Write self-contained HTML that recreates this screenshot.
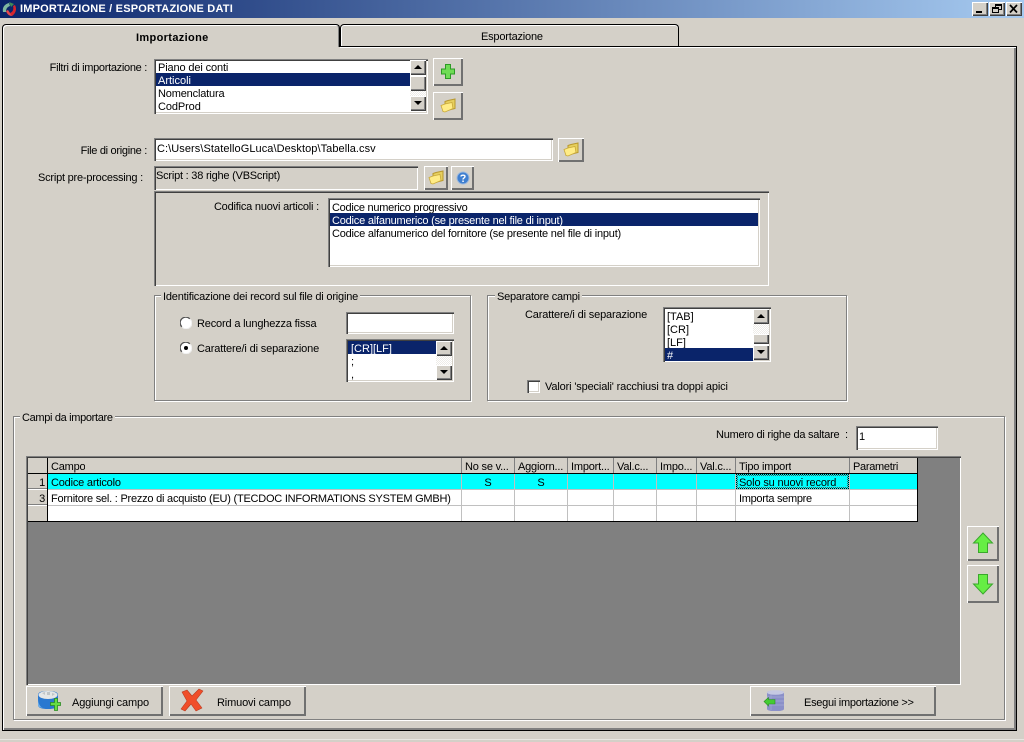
<!DOCTYPE html>
<html><head><meta charset="utf-8"><style>
html,body{margin:0;padding:0;background:#d4d0c8;width:1024px;height:742px;overflow:hidden}
body{position:relative;font-family:"Liberation Sans",sans-serif;font-size:11px;color:#000;letter-spacing:-.2px}
div,svg{position:absolute;box-sizing:border-box}
.t{white-space:pre;line-height:15px;height:13px}
.r{text-align:right}
.s{background:#fff;box-shadow:inset 1px 1px #808080,inset 2px 2px #404040,inset -1px -1px #fff,inset -2px -2px #d4d0c8}
.b{background:#d4d0c8;box-shadow:inset 1px 1px #fff,inset -1px -1px #404040,inset -2px -2px #808080}
.p{background:#d4d0c8;box-shadow:inset 1px 1px #fff,inset -2px -2px #707070}
.g{border:1px solid #808080;box-shadow:1px 1px #fff,inset 1px 1px #fff}
.l{background:#d4d0c8;padding:0 2px;white-space:pre;line-height:17px;height:13px}
.sel{background:#0a246a;color:#fff;height:13px;line-height:17px;white-space:pre;padding-left:2px}
.row{height:13px;line-height:17px;white-space:pre;padding-left:2px}
.up:after,.dn:after{content:"";position:absolute;left:4px;width:0;height:0;border-left:4px solid transparent;border-right:4px solid transparent}
.up:after{top:5px;border-bottom:4px solid #000}
.dn:after{top:5px;border-top:4px solid #000}
.chk{background-color:#eeece8;background-image:linear-gradient(45deg,#fff 25%,transparent 25%,transparent 75%,#fff 75%),linear-gradient(45deg,#fff 25%,transparent 25%,transparent 75%,#fff 75%);background-size:2px 2px;background-position:0 0,1px 1px}
.c{height:15px;line-height:19px;white-space:pre;padding-left:3px;overflow:hidden}
.v{width:1px;background:#c0c0c0}
.h{width:1px;background:#808080}
</style></head><body>

<!-- title bar -->
<div style="left:0;top:0;width:1024px;height:18px;background:linear-gradient(90deg,#0a246a,#a6caf0)"></div>
<svg style="left:1px;top:1px" width="18" height="17" viewBox="0 0 18 17"><path d="M2 11C1 6 4 3 8 2L9 5C6 6 5 8 5 11Z" fill="#7fb9a0"/><path d="M8 1L13 3L10 6Z" fill="#3d8a5a"/><path d="M14 4C16 8 15 12 11 15L9 12C12 11 13 8 12 5Z" fill="#d8262c"/><path d="M5 10C6 13 8 15 11 15L9 12L7 9Z" fill="#e8484c"/></svg>
<div class="t" style="left:20px;top:2px;color:#fff;font-weight:bold;letter-spacing:.2px">IMPORTAZIONE / ESPORTAZIONE DATI</div>
<div class="b" style="left:972px;top:2px;width:16px;height:14px"><div style="left:4px;top:9px;width:6px;height:2px;background:#000"></div></div>
<div class="b" style="left:989px;top:2px;width:16px;height:14px"><div style="left:6px;top:2px;width:7px;height:6px;border:1px solid #000;border-top-width:2px"></div><div style="left:3px;top:5px;width:7px;height:6px;border:1px solid #000;border-top-width:2px;background:#d4d0c8"></div></div>
<div class="b" style="left:1006px;top:2px;width:16px;height:14px"><svg style="left:3px;top:2px" width="10" height="10"><path d="M1 1L8 8.5M8 1L1 8.5" stroke="#000" stroke-width="1.7" fill="none"/></svg></div>

<!-- panel -->
<div style="left:2px;top:46px;width:1015px;height:685px;border:1px solid #000;box-shadow:inset 1px 1px #fff,inset -2px -2px #808080"></div>
<!-- inactive tab -->
<div style="left:340px;top:24px;width:339px;height:23px;background:#d4d0c8;border:1px solid #000;border-bottom:0;border-top-left-radius:4px;border-top-right-radius:4px;box-shadow:inset 0 1px #fff,inset 1px 0 #fff"></div>
<div style="left:340px;top:46px;width:677px;height:1px;background:#000"></div>
<div style="left:340px;top:47px;width:675px;height:1px;background:#fff"></div>
<div class="t" style="left:481px;top:30px">Esportazione</div>
<!-- active tab -->
<div style="left:2px;top:24px;width:338px;height:23px;background:#d4d0c8;border:1px solid #000;border-bottom:0;border-top-left-radius:4px;border-top-right-radius:4px;box-shadow:inset 1px 1px #fff,inset -1px 0 #808080"></div>
<div style="left:3px;top:47px;width:337px;height:2px;background:#d4d0c8;box-shadow:inset 1px 0 #fff"></div>
<div class="t" style="left:136px;top:31px;font-weight:bold;letter-spacing:.35px">Importazione</div>

<!-- filtri -->
<div class="t r" style="left:20px;width:127px;top:61px;letter-spacing:-.3px">Filtri di importazione :</div>
<div class="s" style="left:154px;top:59px;width:274px;height:55px"></div>
<div class="row" style="left:156px;top:60px;letter-spacing:-.13px">Piano dei conti</div>
<div class="sel" style="left:156px;top:73px;width:254px;letter-spacing:0">Articoli</div>
<div class="row" style="left:156px;top:86px;letter-spacing:-.17px">Nomenclatura</div>
<div class="row" style="left:156px;top:99px;letter-spacing:-.1px">CodProd</div>
<div class="b up" style="left:410px;top:60px;width:16px;height:15px"></div>
<div class="b" style="left:410px;top:76px;width:16px;height:15px"></div>
<div class="chk" style="left:410px;top:91px;width:16px;height:5px"></div>
<div class="b dn" style="left:410px;top:96px;width:16px;height:15px"></div>

<div class="p" style="left:433px;top:58px;width:30px;height:28px"><svg style="left:7px;top:5px" width="16" height="17" viewBox="0 0 16 17"><path d="M5.500 1.500H10.500V6H14.500V11H10.500V15.500H5.500V11H1.500V6H5.500Z" fill="#6fdc55" stroke="#2c9a25"/></svg></div>
<div class="p" style="left:433px;top:92px;width:30px;height:28px"><svg style="left:7px;top:6px" width="16" height="16" viewBox="0 0 16 16"><path d="M5 5L5 3.500L8 2.500L15 1V10.500L5 13Z" fill="#e6cf5e" stroke="#b8982e"/><path d="M1 7.500L5 6L12 4.500L13 10.500L5 14L3 13.500Z" fill="#ffec86" stroke="#c8a83a" stroke-width=".8"/></svg></div>

<!-- file -->
<div class="t r" style="left:20px;width:127px;top:144px;letter-spacing:-.3px">File di origine :</div>
<div class="s" style="left:154px;top:138px;width:399px;height:23px"></div>
<div class="t" style="left:157px;top:142px;letter-spacing:.07px">C:\Users\StatelloGLuca\Desktop\Tabella.csv</div>
<div class="p" style="left:558px;top:138px;width:26px;height:24px"><svg style="left:5px;top:4px" width="16" height="16" viewBox="0 0 16 16"><path d="M5 5L5 3.500L8 2.500L15 1V10.500L5 13Z" fill="#e6cf5e" stroke="#b8982e"/><path d="M1 7.500L5 6L12 4.500L13 10.500L5 14L3 13.500Z" fill="#ffec86" stroke="#c8a83a" stroke-width=".8"/></svg></div>

<!-- script -->
<div class="t r" style="left:20px;width:123px;top:171px;letter-spacing:-.22px">Script pre-processing :</div>
<div class="s" style="left:154px;top:166px;width:264px;height:24px;background:#d4d0c8"></div>
<div class="t" style="left:156px;top:169px;letter-spacing:-.22px">Script : 38 righe (VBScript)</div>
<div class="p" style="left:424px;top:166px;width:24px;height:24px"><svg style="left:4px;top:4px" width="16" height="16" viewBox="0 0 16 16"><path d="M5 5L5 3.500L8 2.500L15 1V10.500L5 13Z" fill="#e6cf5e" stroke="#b8982e"/><path d="M1 7.500L5 6L12 4.500L13 10.500L5 14L3 13.500Z" fill="#ffec86" stroke="#c8a83a" stroke-width=".8"/></svg></div>
<div class="p" style="left:451px;top:166px;width:23px;height:24px"><svg style="left:5px;top:5px" width="14" height="14" viewBox="0 0 14 14"><circle cx="7" cy="7" r="6" fill="#3f7fd0" stroke="#9cb9de"/><path d="M5 5.500C5 3.800 9 3.800 9 5.500C9 7 7 6.800 7 8.500" stroke="#fff" stroke-width="1.400" fill="none"/><rect x="6.300" y="9.500" width="1.500" height="1.500" fill="#fff"/></svg></div>

<!-- codifica -->
<div style="left:154px;top:191px;width:615px;height:95px;box-shadow:inset 1px 1px #808080,inset 2px 2px #404040,inset -1px -1px #fff"></div>
<div class="t r" style="left:180px;width:139px;top:200px;letter-spacing:-.2px">Codifica nuovi articoli :</div>
<div class="s" style="left:328px;top:198px;width:432px;height:69px"></div>
<div class="row" style="left:330px;top:200px;letter-spacing:-.26px">Codice numerico progressivo</div>
<div class="sel" style="left:330px;top:213px;width:428px;letter-spacing:-.21px">Codice alfanumerico (se presente nel file di input)</div>
<div class="row" style="left:330px;top:226px;letter-spacing:-.21px">Codice alfanumerico del fornitore (se presente nel file di input)</div>

<!-- group 1 -->
<div class="g" style="left:154px;top:295px;width:317px;height:106px"></div>
<div class="l" style="left:161px;top:289px">Identificazione dei record sul file di origine</div>
<svg style="left:180px;top:317px" width="12" height="12"><circle cx="6" cy="6" r="5.500" fill="#fff"/><path d="M1.800 9.800A5.500 5.500 0 0 1 9.800 1.800" fill="none" stroke="#555" stroke-width="1.300"/><path d="M10.200 2.200A5.500 5.500 0 0 1 2.200 10.200" fill="none" stroke="#eee"/></svg>
<div class="t" style="left:197px;top:317px;letter-spacing:-.17px">Record a lunghezza fissa</div>
<div class="s" style="left:346px;top:312px;width:108px;height:22px"></div>
<svg style="left:180px;top:342px" width="12" height="12"><circle cx="6" cy="6" r="5.500" fill="#fff"/><path d="M1.800 9.800A5.500 5.500 0 0 1 9.800 1.800" fill="none" stroke="#555" stroke-width="1.300"/><path d="M10.200 2.200A5.500 5.500 0 0 1 2.200 10.200" fill="none" stroke="#eee"/><circle cx="6" cy="6" r="2" fill="#000"/></svg>
<div class="t" style="left:197px;top:342px;letter-spacing:-.15px">Carattere/i di separazione</div>
<div class="s" style="left:346px;top:339px;width:108px;height:43px"></div>
<div class="sel" style="left:348px;top:341px;width:88px;padding-left:3px;letter-spacing:0">[CR][LF]</div>
<div class="row" style="left:348px;top:354px;padding-left:3px">;</div>
<div class="row" style="left:348px;top:367px;overflow:hidden;padding-left:3px">,</div>
<div class="b up" style="left:436px;top:341px;width:16px;height:15px"></div>
<div class="chk" style="left:436px;top:356px;width:16px;height:9px"></div>
<div class="b dn" style="left:436px;top:365px;width:16px;height:15px"></div>

<!-- group 2 -->
<div class="g" style="left:487px;top:295px;width:360px;height:106px"></div>
<div class="l" style="left:495px;top:289px;letter-spacing:-.25px">Separatore campi</div>
<div class="t" style="left:525px;top:308px;letter-spacing:-.15px">Carattere/i di separazione</div>
<div class="s" style="left:663px;top:307px;width:108px;height:55px"></div>
<div class="row" style="left:665px;top:309px;letter-spacing:0">[TAB]</div>
<div class="row" style="left:665px;top:322px;letter-spacing:0">[CR]</div>
<div class="row" style="left:665px;top:335px;letter-spacing:0">[LF]</div>
<div class="sel" style="left:665px;top:348px;width:88px">#</div>
<div class="b up" style="left:753px;top:309px;width:16px;height:15px"></div>
<div class="chk" style="left:753px;top:324px;width:16px;height:10px"></div>
<div class="b" style="left:753px;top:334px;width:16px;height:10px"></div>
<div class="b dn" style="left:753px;top:345px;width:16px;height:15px"></div>
<div class="s" style="left:527px;top:380px;width:13px;height:13px"></div>
<div class="t" style="left:545px;top:380px;letter-spacing:-.15px">Valori 'speciali' racchiusi tra doppi apici</div>

<!-- group 3 -->
<div class="g" style="left:13px;top:416px;width:992px;height:304px"></div>
<div class="l" style="left:20px;top:410px;letter-spacing:-.33px">Campi da importare</div>
<div class="t" style="left:716px;top:428px;letter-spacing:-.24px">Numero di righe da saltare  :</div>
<div class="s" style="left:856px;top:426px;width:82px;height:24px"></div>
<div class="t" style="left:859px;top:430px">1</div>

<!-- grid -->
<div style="left:26px;top:456px;width:935px;height:229px;background:#808080;box-shadow:inset 1px 1px #808080,inset 2px 2px #404040,inset -1px -1px #fff"></div>
<div style="left:28px;top:458px;width:889px;height:15px;background:#d4d0c8"></div>
<div style="left:28px;top:473px;width:890px;height:1px;background:#000"></div>
<div style="left:28px;top:474px;width:19px;height:48px;background:#d4d0c8"></div>
<div style="left:48px;top:474px;width:869px;height:15px;background:#00ffff"></div>
<div style="left:48px;top:490px;width:869px;height:15px;background:#fff"></div>
<div style="left:48px;top:506px;width:869px;height:15px;background:#fff"></div>
<div style="left:48px;top:489px;width:869px;height:1px;background:#c0c0c0"></div>
<div style="left:48px;top:505px;width:869px;height:1px;background:#c0c0c0"></div>
<div style="left:28px;top:489px;width:19px;height:1px;background:#fff"></div>
<div style="left:28px;top:505px;width:19px;height:1px;background:#fff"></div>
<div style="left:28px;top:488px;width:19px;height:1px;background:#808080"></div>
<div style="left:28px;top:504px;width:19px;height:1px;background:#808080"></div>
<div style="left:28px;top:521px;width:890px;height:1px;background:#000"></div>
<div style="left:47px;top:458px;width:1px;height:64px;background:#000"></div>
<div style="left:917px;top:458px;width:1px;height:64px;background:#000"></div>

<div class="h" style="left:461px;top:458px;height:15px"></div>
<div class="h" style="left:514px;top:458px;height:15px"></div>
<div class="h" style="left:567px;top:458px;height:15px"></div>
<div class="h" style="left:613px;top:458px;height:15px"></div>
<div class="h" style="left:656px;top:458px;height:15px"></div>
<div class="h" style="left:696px;top:458px;height:15px"></div>
<div class="h" style="left:735px;top:458px;height:15px"></div>
<div class="h" style="left:849px;top:458px;height:15px"></div>

<div class="v" style="left:461px;top:474px;height:47px"></div>
<div class="v" style="left:514px;top:474px;height:47px"></div>
<div class="v" style="left:567px;top:474px;height:47px"></div>
<div class="v" style="left:613px;top:474px;height:47px"></div>
<div class="v" style="left:656px;top:474px;height:47px"></div>
<div class="v" style="left:696px;top:474px;height:47px"></div>
<div class="v" style="left:735px;top:474px;height:47px"></div>
<div class="v" style="left:849px;top:474px;height:47px"></div>

<div class="c" style="left:48px;top:458px">Campo</div>
<div class="c" style="left:462px;top:458px;width:52px">No se v...</div>
<div class="c" style="left:515px;top:458px;width:52px">Aggiorn...</div>
<div class="c" style="left:568px;top:458px;width:45px">Import...</div>
<div class="c" style="left:614px;top:458px;width:42px">Val.c...</div>
<div class="c" style="left:657px;top:458px;width:39px">Impo...</div>
<div class="c" style="left:697px;top:458px;width:38px">Val.c...</div>
<div class="c" style="left:736px;top:458px">Tipo import</div>
<div class="c" style="left:850px;top:458px;letter-spacing:-.3px">Parametri</div>

<div class="t r" style="left:28px;width:17px;top:476px">1</div>
<div class="t r" style="left:28px;width:17px;top:492px">3</div>
<div class="c" style="left:48px;top:474px">Codice articolo</div>
<div class="c" style="left:48px;top:490px;letter-spacing:-.23px">Fornitore sel. : Prezzo di acquisto (EU) (TECDOC INFORMATIONS SYSTEM GMBH)</div>
<div class="t" style="left:462px;width:52px;top:476px;text-align:center">S</div>
<div class="t" style="left:515px;width:52px;top:476px;text-align:center">S</div>
<div class="c" style="left:736px;top:474px;letter-spacing:-.15px">Solo su nuovi record</div>
<div style="left:736px;top:474px;width:113px;height:15px;border:1px dotted #000;outline:1px dotted #555;outline-offset:-2px"></div>
<div class="c" style="left:736px;top:490px;letter-spacing:-.3px">Importa sempre</div>

<!-- side arrows -->
<div class="p" style="left:967px;top:526px;width:32px;height:35px"><svg style="left:5px;top:6px" width="22" height="22" viewBox="0 0 22 22"><path d="M11 1L20.500 11H15.500V20.500H6.500V11H1.500Z" fill="#66ee44" stroke="#3aa82c"/></svg></div>
<div class="p" style="left:967px;top:565px;width:32px;height:38px"><svg style="left:5px;top:8px" width="22" height="22" viewBox="0 0 22 22"><path d="M11 21L20.500 11H15.500V1.500H6.500V11H1.500Z" fill="#66ee44" stroke="#3aa82c"/></svg></div>

<!-- bottom buttons -->
<div class="p" style="left:26px;top:686px;width:137px;height:30px"><svg style="left:11px;top:3px" width="24" height="23" viewBox="0 0 24 23"><path d="M1 6C1 3 5 2 11 2C17 2 21 3 21 6V16C21 19 17 20 11 20C5 20 1 19 1 16Z" fill="#2a78d0"/><path d="M1 10C1 14 3 18 6 19C3 18.500 1 18 1 16Z" fill="#6eaee8"/><ellipse cx="11" cy="6" rx="9.500" ry="4" fill="#e4e6e6"/><path d="M5 4L8 3L8 6ZM10 3L13 3L13 6L10 6ZM15 4L18 5L15 7Z" fill="#bfc4c6"/><path d="M13.500 13.500H17.500V9.500H20.500V13.500H23.500V16.500H20.500V21.500H17.500V16.500H13.500Z" fill="#66dd44" stroke="#2a8a22" stroke-width=".8"/></svg><div class="t" style="left:46px;top:10px;letter-spacing:-.14px">Aggiungi campo</div></div>
<div class="p" style="left:169px;top:686px;width:137px;height:30px"><svg style="left:11px;top:2px" width="24" height="25" viewBox="0 0 24 25"><path d="M2 4L7 2L12 8L19 1L23 3L16 12L22 20L16 23L11 16L5 23L1 21L7 13Z" fill="#f04e2a" stroke="#b83a20" stroke-width=".6" stroke-linejoin="round"/></svg><div class="t" style="left:48px;top:10px;letter-spacing:-.15px">Rimuovi campo</div></div>
<div class="p" style="left:750px;top:686px;width:186px;height:30px"><svg style="left:13px;top:3px" width="22" height="22" viewBox="0 0 22 22"><path d="M4 3.500C4 .800 21 .800 21 3.500V20C21 23 4 23 4 20Z" fill="#8b90c8"/><path d="M8 5V21M4 8H21M4 12H21M4 16H21" stroke="#a6aad6" stroke-width=".7" fill="none"/><ellipse cx="12.500" cy="3.500" rx="8.500" ry="2.300" fill="#c6c9e2"/><path d="M1 12.500L5.500 8.500V10.500H12V15H5.500V17Z" fill="#44cc33" stroke="#2a8a22" stroke-width=".6"/></svg><div class="t" style="left:54px;top:10px;letter-spacing:-.27px">Esegui importazione &gt;&gt;</div></div>

<div style="left:0;top:739px;width:1024px;height:1px;background:#e8e6e1"></div>
</body></html>
